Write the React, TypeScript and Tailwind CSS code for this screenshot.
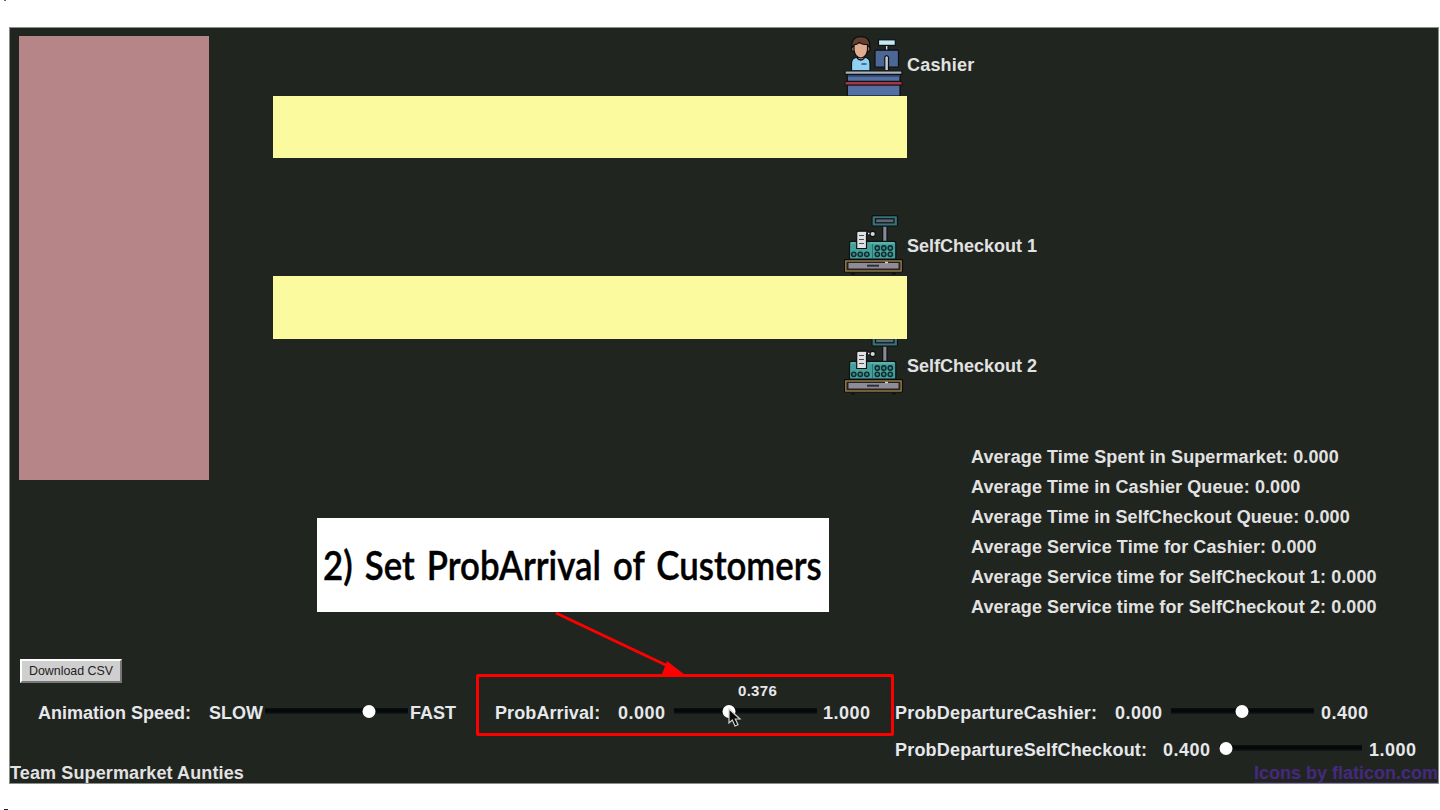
import type { ReactNode } from "react";

function CashierIcon() {
  return (
    <svg width="60" height="60" viewBox="0 0 60 60" className="block shrink-0">
      <g stroke="#0b0f12" strokeWidth="1.2">
        <path d="M7.500 35V27.500q0-6 6-6h6.500q6 0 6 6V35z" fill="#8fd0f3" />
        <path d="M13.500 18h6.500v4.500q-3.200 3-6.500 0z" fill="#d99f83" />
        <rect x="7.500" y="10" width="18.500" height="5.500" rx="2.500" fill="#b37a5c" />
        <path d="M10 8.500q6.500-5 13.500 0V14q-1 7.500-6.700 8Q11 21.500 10 14z" fill="#e0ad91" />
        <path d="M8 11.500Q7 0.700 16.800 0.700q9.800 0 8.900 10.800l-2.400-3q-6 0-8-2.200-1.800 2-4.800 2.400z" fill="#65402f" />
        <rect x="41.300" y="9" width="2.700" height="6" fill="#d5dade" />
        <rect x="34.500" y="3.800" width="16.800" height="5.600" fill="#c3e9f5" />
        <rect x="31" y="14.200" width="23.500" height="17" rx="1.500" fill="#4c6795" />
        <path d="M40.800 34.500V21q1.800-2.700 3.700 0v13.500z" fill="#c5cbd0" />
        <rect x="3.300" y="38" width="52.700" height="22" fill="#5270a3" />
        <rect x="1" y="34.800" width="57" height="3.500" rx="1" fill="#aab3ba" />
      </g>
      <path d="M4 39h51.500v1.800H4z" fill="#30446d" />
      <rect x="0.500" y="44.800" width="58" height="5" rx="1.500" fill="#101316" />
      <rect x="1.500" y="46" width="56" height="2.500" fill="#a83540" />
      <path d="M17.500 28h5" stroke="#2f5270" strokeWidth="1.500" />
    </svg>
  );
}

function RegisterIcon() {
  const keys = [8, 14.5, 21, 31.5, 38, 44.5];
  return (
    <svg width="60" height="60" viewBox="0 0 60 60" className="block shrink-0">
      <g stroke="#0c1112" strokeWidth="1.200">
        <rect x="38.700" y="10" width="4.300" height="17" fill="#8b8997" />
        <rect x="28" y="0.700" width="25.500" height="10.500" rx="1.500" fill="#387278" />
        <rect x="31.500" y="3.800" width="18.500" height="4" fill="#5a6a74" />
        <path d="M24 18.500h4" stroke="#d8d8dc" strokeWidth="1.500" />
        <circle cx="28.700" cy="19" r="2.700" fill="#d6d6da" />
        <path d="M5.500 44V28q0-1.700 1.700-1.700H50q1.800 0 1.800 1.700v16z" fill="#45a09c" />
        <path d="M7 28h4M26 28h24" stroke="#6ec2bb" strokeWidth="1" />
        <path d="M12.700 33.500V18q0-1.800 1.800-1.800h9.300q-1.300 1-1.300 3v14.300z" fill="#e2e2e4" />
        <path d="M15 20.500h5M15 24.500h5M15 28.500h5" stroke="#4b4e50" />
      </g>
      <g fill="#3a8584" stroke="#10292c" strokeWidth="1.400">
        {keys.map((x) => (
          <circle key={x} cx={x + 1.8} cy="39.300" r="2.200" />
        ))}
        {keys.slice(3).map((x) => (
          <circle key={x} cx={x + 1.8} cy="33" r="2.200" />
        ))}
      </g>
      <path d="M28.500 29v14" stroke="#287270" strokeWidth="1" />
      <rect x="0.500" y="44.500" width="58" height="12.500" rx="1" fill="#28231a" stroke="#0c0d0b" strokeWidth="1.200" />
      <rect x="1.800" y="46" width="55.300" height="10" fill="none" stroke="#a38c55" strokeWidth="1.200" />
      <rect x="4.500" y="48" width="50" height="5.500" fill="#8f8b99" />
      <path d="M23 50.700h12" stroke="#303039" strokeWidth="2" />
      <path d="M41 47.500h3" stroke="#e6d9a1" strokeWidth="1.400" />
      <path d="M7 58.500h4M48 58.500h4" stroke="#17130c" strokeWidth="2.200" />
    </svg>
  );
}

function Slider({ thumb, children }: { thumb: number; children?: ReactNode }) {
  return (
    <div className="relative h-[6px] w-[143px] shrink-0 bg-linear-to-b from-[#0b0f0f] via-[#030606] to-[#151a19]">
      <div
        className="absolute top-[-3px] size-[13px] -translate-x-1/2 rounded-full bg-white"
        style={{ left: thumb }}
      />
      {children}
    </div>
  );
}

function Cursor() {
  return (
    <svg width="14" height="20" viewBox="0 0 14 20" className="absolute top-0 left-[54px]">
      <path d="M1 1v14l3.300-3 2.700 6 3-1.300-2.700-5.700H12z" fill="#080808" stroke="#d2d2d2" strokeWidth="1.200" />
    </svg>
  );
}

const stats = [
  "Average Time Spent in Supermarket: 0.000",
  "Average Time in Cashier Queue: 0.000",
  "Average Time in SelfCheckout Queue: 0.000",
  "Average Service Time for Cashier: 0.000",
  "Average Service time for SelfCheckout 1: 0.000",
  "Average Service time for SelfCheckout 2: 0.000",
];

export default function App() {
  return (
    <div className="relative h-[810px] w-[1440px] overflow-hidden bg-white pt-[27px] pl-[9px] font-['Liberation_Sans',Arial,sans-serif] text-[18px] leading-[20px] font-bold whitespace-nowrap text-[#e2e2e2]">
      <div className="absolute top-0 left-1 h-px w-[2px] bg-[#8a5a4a]" />
      <div className="absolute top-[809px] left-1 h-px w-[4px] bg-[#222]" />
      <main className="relative flex h-[757px] w-[1430px] flex-col border border-[#8b8d8b] bg-[#212520]">
        <section className="flex h-[631px]">
          <div className="mt-2 ml-[9px] h-[444px] w-[190px] shrink-0 bg-[#b68587]" />
          <div className="ml-16 flex flex-col">
            <div className="flex h-[68px] pt-2 pl-[571px]">
              <CashierIcon />
              <span className="mt-[19px] ml-[3px] tracking-[0.2px]">Cashier</span>
            </div>
            <div className="z-10 h-[62px] w-[634px] bg-[#fcfa9f]" />
            <div className="flex h-[118px] pt-[57px] pl-[571px]">
              <RegisterIcon />
              <span className="mt-[21px] ml-[3px]">SelfCheckout 1</span>
            </div>
            <div className="z-10 h-[63px] w-[634px] bg-[#fcfa9f]" />
            <div className="-mt-[4px] flex h-[60px] pl-[571px]">
              <RegisterIcon />
              <span className="mt-[21px] ml-[3px]">SelfCheckout 2</span>
            </div>
            <ul className="mt-[47px] pl-[698px] leading-[30px] tracking-[0.09px]">
              {stats.map((line) => (
                <li key={line}>{line}</li>
              ))}
            </ul>
          </div>
        </section>

        <button className="ml-[10px] flex h-6 w-[102px] items-center justify-center border-2 border-t-white border-r-[#777] border-b-[#777] border-l-white bg-[#cfcfcf] text-[12.4px] font-normal text-[#222]">
          Download CSV
        </button>

        <div className="mt-[20px] flex h-[20px] items-center text-[#e6e8eb]">
          <span className="ml-[28px] w-[171px]">Animation Speed:</span>
          <span className="w-[56px]">SLOW</span>
          <div className="-mt-[5px]">
            <Slider thumb={104} />
          </div>
          <span className="ml-[2px] w-[85px]">FAST</span>
          <span className="w-[123px] tracking-[0.1px]">ProbArrival:</span>
          <span className="w-[56px] tracking-[0.5px]">0.000</span>
          <div className="-mt-[5px]">
            <Slider thumb={55}>
              <span className="absolute top-[-27px] left-[64px] text-[15px] tracking-[0.3px]">0.376</span>
              <Cursor />
            </Slider>
          </div>
          <span className="ml-[6px] w-[72px] tracking-[0.5px]">1.000</span>
          <span className="w-[220px] tracking-[0.2px]">ProbDepartureCashier:</span>
          <span className="w-[56px] tracking-[0.5px]">0.000</span>
          <div className="-mt-[5px]">
            <Slider thumb={71} />
          </div>
          <span className="ml-[7px] tracking-[0.5px]">0.400</span>
        </div>

        <div className="mt-[17px] ml-[885px] flex h-[20px] items-center text-[#e6e8eb]">
          <span className="w-[268px] tracking-[0.2px]">ProbDepartureSelfCheckout:</span>
          <span className="w-[56px] tracking-[0.5px]">0.400</span>
          <div className="-mt-[5px]">
            <Slider thumb={7} />
          </div>
          <span className="ml-[7px] tracking-[0.5px]">1.000</span>
        </div>

        <footer className="mt-[3px] flex h-[20px] justify-between">
          <span className="tracking-[0.12px]">Team Supermarket Aunties</span>
          <span className="text-[#46297f] underline decoration-[#36255b] decoration-1 underline-offset-3">
            Icons by flaticon.com
          </span>
        </footer>

        <div className="absolute top-[490px] left-[307px] flex h-[94px] w-[512px] items-center bg-white pl-[6px]">
          <span className="origin-left scale-x-[0.87] font-['Lato',sans-serif] text-[40px] leading-[48px] font-semibold text-black [word-spacing:4px] [-webkit-text-stroke:0.4px_black]">
            2) Set ProbArrival of Customers
          </span>
        </div>
        <div className="absolute top-[646px] left-[466px] h-[62px] w-[418px] rounded-[2px] border-3 border-[#fe0000]" />
        <svg width="136" height="68" viewBox="0 0 136 68" className="absolute top-[582px] left-[544px]">
          <path d="M2 3 118 58" stroke="#fe0000" strokeWidth="3" fill="none" />
          <path d="M113 51 131 65 108 64z" fill="#fe0000" />
        </svg>
      </main>
    </div>
  );
}
